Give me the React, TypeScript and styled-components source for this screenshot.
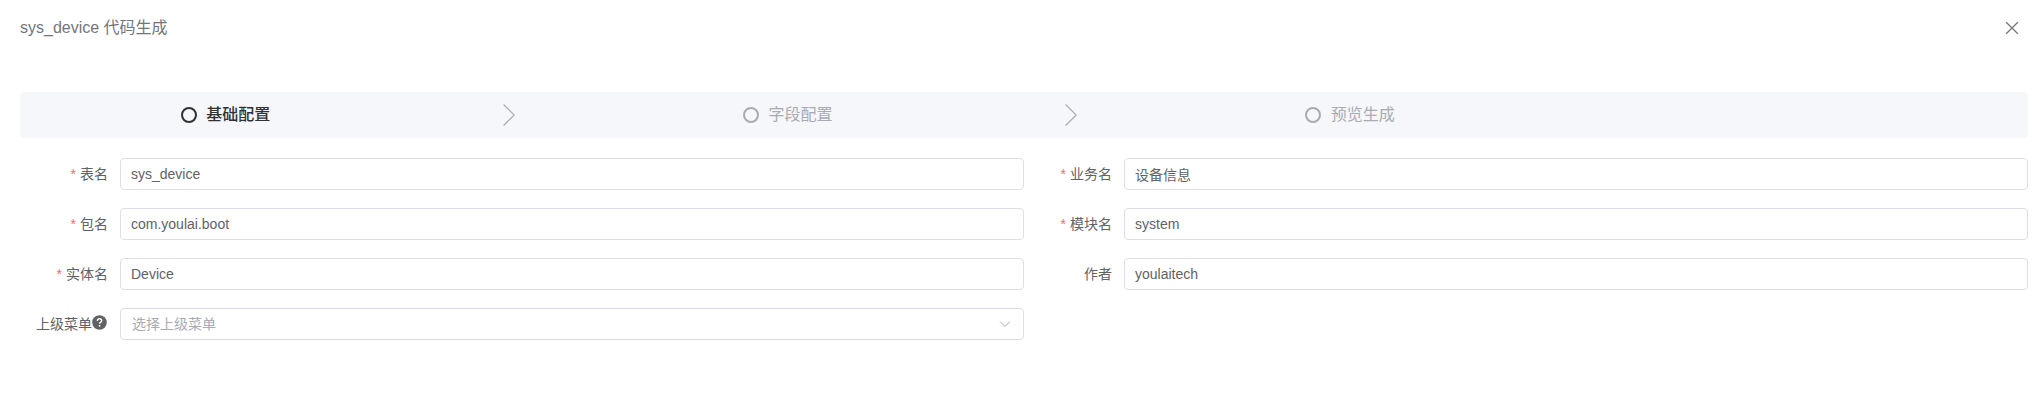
import React from 'react';
import styled, { createGlobalStyle } from 'styled-components';

const GlobalStyle = createGlobalStyle`
  *, *::before, *::after { box-sizing: border-box; }
  body {
    margin: 0;
    background: #fff;
    color: #606266;
    font-family: 'Liberation Sans', 'Noto Sans CJK SC', sans-serif;
    font-size: 14px;
  }
`;

const Drawer = styled.main`
  display: flex;
  flex-direction: column;
  height: 404px;
  padding: 0 12px 0 20px;
`;

const Header = styled.header`
  display: flex;
  align-items: center;
  justify-content: space-between;
  height: 56px;
  margin-bottom: 36px;
  padding-right: 6px;
  color: #72767b;
`;

const Title = styled.h1`
  margin: 0;
  font-size: 16px;
  font-weight: 400;
  line-height: 22px;
`;

const CloseButton = styled.button`
  display: flex;
  padding: 0;
  border: 0;
  background: none;
  color: inherit;
  cursor: pointer;
`;

const Steps = styled.ol`
  display: flex;
  margin: 0 0 20px;
  padding: 13px 8%;
  border-radius: 4px;
  background: #f5f7fa;
  list-style: none;
`;

const Step = styled.li<{ $active?: boolean }>`
  display: flex;
  flex: 1;
  align-items: center;
  height: 20px;
  color: ${p => (p.$active ? '#303133' : '#a8abb2')};
  font-size: 16px;
  font-weight: ${p => (p.$active ? 500 : 400)};
`;

const StepRing = styled.span`
  width: 16px;
  height: 16px;
  margin-right: 9.6px;
  border: 2px solid currentColor;
  border-radius: 50%;
`;

const StepTitle = styled.span`
  line-height: 20px;
`;

const StepArrow = styled.span`
  display: flex;
  flex: 1;
  justify-content: center;
  padding-left: 4px;
  color: #a8abb2;
`;

const Form = styled.form`
  display: grid;
  grid-template-columns: 1fr 1fr;
  row-gap: 18px;
`;

const Field = styled.div`
  display: flex;
  height: 32px;
`;

const Label = styled.label<{ $required?: boolean }>`
  display: flex;
  flex: 0 0 100px;
  align-items: center;
  justify-content: flex-end;
  padding-right: 12px;
  line-height: 32px;
  white-space: nowrap;

  &::before {
    content: ${p => (p.$required ? "'*'" : 'none')};
    margin-right: 4px;
    color: #f56c6c;
  }
`;

const Input = styled.input`
  flex: 1;
  min-width: 0;
  height: 32px;
  padding: 0 10px;
  border: 1px solid #dcdfe6;
  border-radius: 4px;
  outline: none;
  background: #fff;
  color: #606266;
  font: inherit;
  line-height: 30px;
`;

const Select = styled.div`
  display: flex;
  flex: 1;
  align-items: center;
  justify-content: space-between;
  padding: 0 11px;
  border: 1px solid #dcdfe6;
  border-radius: 4px;
  color: #a8abb2;
  line-height: 30px;
  cursor: pointer;
`;

const HelpIcon = styled.svg`
  margin: -3px 1px 0 0;
`;

const steps = ['基础配置', '字段配置', '预览生成'];

const fields = [
  { label: '表名', value: 'sys_device', required: true },
  { label: '业务名', value: '设备信息', required: true },
  { label: '包名', value: 'com.youlai.boot', required: true },
  { label: '模块名', value: 'system', required: true },
  { label: '实体名', value: 'Device', required: true },
  { label: '作者', value: 'youlaitech', required: false },
];

export default function App() {
  return (
    <Drawer>
      <GlobalStyle />
      <Header>
        <Title>sys_device 代码生成</Title>
        <CloseButton aria-label="Close">
          <svg width="20" height="20" viewBox="0 0 20 20" fill="none" stroke="currentColor" strokeWidth="1.3">
            <path d="M4.2 4.2 15.8 15.8M15.8 4.2 4.2 15.8" />
          </svg>
        </CloseButton>
      </Header>
      <Steps>
        {steps.map((name, i) => (
          <Step key={name} $active={i === 0}>
            <StepRing />
            <StepTitle>{name}</StepTitle>
            {i < steps.length - 1 && (
              <StepArrow>
                <svg width="12" height="22" viewBox="0 0 12 22" fill="none" stroke="currentColor" strokeWidth="1.15">
                  <path d="M.6.5 11.2 11 .6 21.5" />
                </svg>
              </StepArrow>
            )}
          </Step>
        ))}
      </Steps>
      <Form>
        {fields.map((f, i) => (
          <Field key={f.label}>
            <Label htmlFor={`field-${i}`} $required={f.required}>{f.label}</Label>
            <Input id={`field-${i}`} defaultValue={f.value} />
          </Field>
        ))}
        <Field>
          <Label>
            上级菜单
            <HelpIcon width="15" height="15" viewBox="0 0 15 15">
              <circle cx="7.5" cy="7.5" r="7.3" fill="#606266" />
              <path d="M5.4 6C5.4 4.5 6.3 3.8 7.5 3.8S9.7 4.6 9.7 5.7C9.7 7.1 7.6 7.1 7.6 8.8" fill="none" stroke="#fff" strokeWidth="1.4" />
              <circle cx="7.6" cy="10.8" r=".9" fill="#fff" />
            </HelpIcon>
          </Label>
          <Select>
            选择上级菜单
            <svg width="14" height="14" viewBox="0 0 14 14" fill="none" stroke="currentColor">
              <path d="m2.2 4.7 4.8 4.8 4.8-4.8" />
            </svg>
          </Select>
        </Field>
      </Form>
    </Drawer>
  );
}
